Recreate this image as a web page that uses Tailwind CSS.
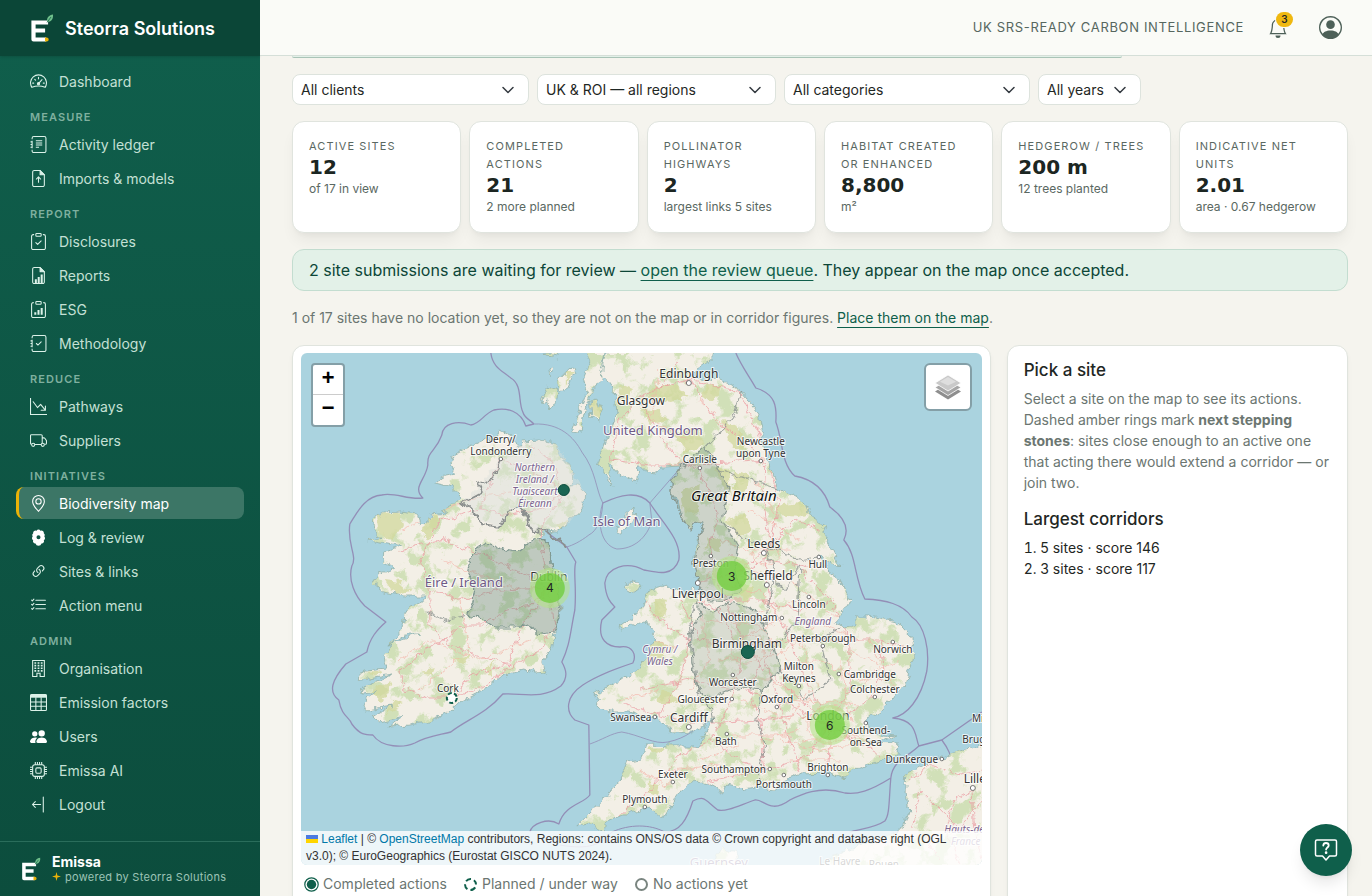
<!DOCTYPE html>
<html lang="en">
<head>
    <meta charset="UTF-8">
    <meta name="viewport" content="width=device-width, initial-scale=1.0">
    <title>Biodiversity map - Steorra Solutions</title>
    <script src="https://cdn.jsdelivr.net/npm/@tailwindcss/browser@4"></script>
</head>
<body class="flex h-screen overflow-hidden bg-[#f5f4ee] font-[Inter,sans-serif] text-[#1f2724]">

    <!-- Shared symbols -->
    <svg class="hidden">
        <symbol id="logo" viewBox="0 0 24 28">
            <path d="M3.500 8.500H16M3.500 8.500V25.500H14M3.500 16.500H13" fill="none" stroke="#fff" stroke-width="4.200" stroke-linecap="square" stroke-linejoin="round"/>
            <path d="M15 27.600V23.400h1.600a2.100 2.100 0 0 1 0 4.200z" fill="#eab308"/>
            <path d="M17 8C16.500 3.500 19 1 23 .5C23.500 4.500 21.500 8 17 8z" fill="#6fbf8b"/>
            <path d="M17 8.500L21 3" stroke="#14604c" stroke-width=".8"/>
        </symbol>
    </svg>

    <!-- Sidebar -->
    <aside class="flex w-[260px] shrink-0 flex-col bg-linear-to-b from-[#105f4c] to-[#0c4d3d]">
        <div class="flex h-14 shrink-0 items-center gap-[11px] bg-[#0b4637] pl-[30px] shadow">
            <svg class="h-7 w-6" aria-hidden="true"><use href="#logo"/></svg>
            <span class="text-[18px] font-semibold text-white">Steorra Solutions</span>
        </div>

        <nav class="flex grow flex-col gap-[2px] px-4 pt-[9px] text-[14px] text-[#c4e0d5]">
            <a href="#" class="flex h-8 items-center gap-3 rounded-lg pl-[14px]">
                <svg class="size-[17px] text-[#dcf2e9]" viewBox="0 0 16 16" fill="none" stroke="currentColor" stroke-linecap="round"><path d="M1.800 13.500A7.500 7.500 0 1 1 14.200 13.500C10.500 12 5.500 12 1.800 13.500zM8 4v1.500M3.500 9.500H2.500M13.500 9.500H12.500M4.500 6l.7.7M8 10l3.300-3.700"/><circle cx="8" cy="10" r="1" fill="currentColor"/></svg>
                Dashboard
            </a>

            <h2 class="h-[27px] pt-[9px] pl-[14px] text-[11px] leading-[18px] font-semibold tracking-widest text-[#7fb09f]">MEASURE</h2>
            <a href="#" class="flex h-8 items-center gap-3 rounded-lg pl-[14px]">
                <svg class="size-[17px] text-[#dcf2e9]" viewBox="0 0 16 16" fill="none" stroke="currentColor"><path d="M2 3V2a1.500 1.500 0 0 1 1.500-1.500h10A1.500 1.500 0 0 1 15 2v12a1.500 1.500 0 0 1-1.500 1.500h-10A1.500 1.500 0 0 1 2 14v-1M.5 5.500h2M.5 8h2M.5 10.500h2M2 4.500v7"/><path d="M5.500 4.500h6M5.500 6.500h6M5.500 8.500h6M5.500 10.500h3"/></svg>
                Activity ledger
            </a>
            <a href="#" class="flex h-8 items-center gap-3 rounded-lg pl-[14px]">
                <svg class="size-[17px] text-[#dcf2e9]" viewBox="0 0 16 16" fill="none" stroke="currentColor" stroke-linecap="round" stroke-linejoin="round"><path d="M9.500.5H4A1.500 1.500 0 0 0 2.500 2v12A1.500 1.500 0 0 0 4 15.500h8a1.500 1.500 0 0 0 1.500-1.500V4.500zM8 11.500v-5M6 8.500l2-2 2 2"/><path d="M9.500.5v4h4z" fill="currentColor"/></svg>
                Imports &amp; models
            </a>

            <h2 class="h-[27px] pt-[9px] pl-[14px] text-[11px] leading-[18px] font-semibold tracking-widest text-[#7fb09f]">REPORT</h2>
            <a href="#" class="flex h-8 items-center gap-3 rounded-lg pl-[14px]">
                <svg class="size-[17px] text-[#dcf2e9]" viewBox="0 0 16 16" fill="none" stroke="currentColor" stroke-linecap="round" stroke-linejoin="round"><path d="M3.500 1.500H3A1.500 1.500 0 0 0 1.500 3v11A1.500 1.500 0 0 0 3 15.500h10a1.500 1.500 0 0 0 1.500-1.500V3A1.500 1.500 0 0 0 13 1.500h-.5M5.500 9l1.700 1.700L10.500 7.500"/><rect x="5.500" y=".5" width="5" height="2.500" rx=".7"/></svg>
                Disclosures
            </a>
            <a href="#" class="flex h-8 items-center gap-3 rounded-lg pl-[14px]">
                <svg class="size-[17px] text-[#dcf2e9]" viewBox="0 0 16 16" fill="none" stroke="currentColor" stroke-linejoin="round"><path d="M9.500.5H4A1.500 1.500 0 0 0 2.500 2v12A1.500 1.500 0 0 0 4 15.500h8a1.500 1.500 0 0 0 1.500-1.500V4.500z"/><path d="M9.500.5v4h4z" fill="currentColor"/><path d="M5.500 15v-3.500M8.200 15V9.500M11 15V7" stroke-width="1.900"/></svg>
                Reports
            </a>
            <a href="#" class="flex h-8 items-center gap-3 rounded-lg pl-[14px]">
                <svg class="size-[17px] text-[#dcf2e9]" viewBox="0 0 16 16" fill="none" stroke="currentColor" stroke-linejoin="round"><path d="M3.500 1.500H3A1.500 1.500 0 0 0 1.500 3v11A1.500 1.500 0 0 0 3 15.500h10a1.500 1.500 0 0 0 1.500-1.500V3A1.500 1.500 0 0 0 13 1.500h-.5"/><rect x="5.500" y=".5" width="5" height="2.500" rx=".7"/><path d="M5 13v-2.500M8 13V8.500M11 13V6.500" stroke-width="1.900"/></svg>
                ESG
            </a>
            <a href="#" class="flex h-8 items-center gap-3 rounded-lg pl-[14px]">
                <svg class="size-[17px] text-[#dcf2e9]" viewBox="0 0 16 16" fill="none" stroke="currentColor"><path d="M2 3V2a1.500 1.500 0 0 1 1.500-1.500h10A1.500 1.500 0 0 1 15 2v12a1.500 1.500 0 0 1-1.500 1.500h-10A1.500 1.500 0 0 1 2 14v-1M.5 5.500h2M.5 8h2M.5 10.500h2M2 4.500v7"/><path d="M6 8l1.500 1.500 3-3" stroke-linecap="round"/></svg>
                Methodology
            </a>

            <h2 class="h-[27px] pt-[9px] pl-[14px] text-[11px] leading-[18px] font-semibold tracking-widest text-[#7fb09f]">REDUCE</h2>
            <a href="#" class="flex h-8 items-center gap-3 rounded-lg pl-[14px]">
                <svg class="size-[17px] text-[#dcf2e9]" viewBox="0 0 16 16" fill="currentColor"><path d="M0 0h1v15h15v1H0zm10 11.500a.5.5 0 0 0 .5.5h4a.5.5 0 0 0 .5-.5v-4a.5.5 0 0 0-1 0v2.600l-3.613-4.417a.5.5 0 0 0-.74-.037L7.060 8.233 3.404 3.206a.5.5 0 0 0-.808.588l4 5.500a.5.5 0 0 0 .758.06l2.609-2.610L13.445 11H10.500a.5.5 0 0 0-.5.5"/></svg>
                Pathways
            </a>
            <a href="#" class="flex h-8 items-center gap-3 rounded-lg pl-[14px]">
                <svg class="size-[17px] text-[#dcf2e9]" viewBox="0 0 16 16" fill="none" stroke="currentColor"><path d="M1.500 11.500A1 1 0 0 1 .5 10.500v-7a1 1 0 0 1 1-1h9a1 1 0 0 1 1 1v7M4.500 11.800h6M11.500 5.500h1.600a1 1 0 0 1 .8.400l1.300 1.700a1 1 0 0 1 .3.700v2.200a1 1 0 0 1-1 1h-.8"/><circle cx="3" cy="12" r="1.500"/><circle cx="12" cy="12" r="1.500"/></svg>
                Suppliers
            </a>

            <h2 class="h-[27px] pt-[9px] pl-[14px] text-[11px] leading-[18px] font-semibold tracking-widest text-[#7fb09f]">INITIATIVES</h2>
            <a href="#" aria-current="page" class="flex h-8 items-center gap-3 rounded-lg border-l-[3px] border-[#eab308] bg-[#3c7666] pl-[11px] text-white">
                <svg class="size-[17px]" viewBox="0 0 16 16" fill="currentColor"><path d="M12.166 8.940c-.524 1.062-1.234 2.120-1.960 3.070A32 32 0 0 1 8 14.580a32 32 0 0 1-2.206-2.570c-.726-.950-1.436-2.008-1.960-3.070C3.304 7.867 3 6.862 3 6a5 5 0 0 1 10 0c0 .862-.305 1.867-.834 2.940M8 16s6-5.686 6-10A6 6 0 0 0 2 6c0 4.314 6 10 6 10"/><path d="M8 8a2 2 0 1 1 0-4 2 2 0 0 1 0 4m0 1a3 3 0 1 0 0-6 3 3 0 0 0 0 6"/></svg>
                Biodiversity map
            </a>
            <a href="#" class="flex h-8 items-center gap-3 rounded-lg pl-[14px]">
                <svg class="size-[17px] text-white" viewBox="0 0 16 16" fill="currentColor"><path fill-rule="evenodd" d="M8 .5A2 2 0 0 1 9.800 1.600A2.200 2.200 0 0 1 13 4A2.200 2.200 0 0 1 13.500 7A2.500 2.500 0 0 1 13 10.500A2.200 2.200 0 0 1 10.800 13.600A2.900 2.900 0 0 1 5.200 13.600A2.200 2.200 0 0 1 3 10.500A2.500 2.500 0 0 1 2.500 7A2.200 2.200 0 0 1 3 4A2.200 2.200 0 0 1 6.200 1.600A2 2 0 0 1 8 .5M8 5.800a1.900 1.900 0 1 0 0 3.800a1.900 1.900 0 0 0 0-3.800"/></svg>
                Log &amp; review
            </a>
            <a href="#" class="flex h-8 items-center gap-3 rounded-lg pl-[14px]">
                <svg class="size-[17px] text-[#dcf2e9]" viewBox="0 0 16 16" fill="currentColor"><path d="M4.715 6.542 3.343 7.914a3 3 0 1 0 4.243 4.243l1.828-1.829A3 3 0 0 0 8.586 5.500L8 6.086a1 1 0 0 0-.154.199 2 2 0 0 1 .861 3.337L6.880 11.450a2 2 0 1 1-2.830-2.830l.793-.792a4 4 0 0 1-.128-1.287z"/><path d="M6.586 4.672A3 3 0 0 0 7.414 9.500l.775-.776a2 2 0 0 1-.896-3.346L9.120 3.550a2 2 0 1 1 2.830 2.830l-.793.792c.112.420.155.855.128 1.287l1.372-1.372a3 3 0 1 0-4.243-4.243z"/></svg>
                Sites &amp; links
            </a>
            <a href="#" class="flex h-8 items-center gap-3 rounded-lg pl-[14px]">
                <svg class="size-[17px] text-[#dcf2e9]" viewBox="0 0 16 16" fill="none" stroke="currentColor" stroke-linecap="round" stroke-linejoin="round"><path d="M5.500 3h9M5.500 7h9M5.500 11h9M1.500 3l.7.7 1.500-1.700M1.500 7l.7.7 1.500-1.700M1.500 11l.7.7 1.500-1.700"/></svg>
                Action menu
            </a>

            <h2 class="h-[27px] pt-[9px] pl-[14px] text-[11px] leading-[18px] font-semibold tracking-widest text-[#7fb09f]">ADMIN</h2>
            <a href="#" class="flex h-8 items-center gap-3 rounded-lg pl-[14px]">
                <svg class="size-[17px] text-[#dcf2e9]" viewBox="0 0 16 16" fill="none" stroke="currentColor"><path d="M2.500.5h11v15h-4v-3h-3v3h-4z"/><path d="M5 2v9M8 2v9M11 2v9" stroke-width="1.700" stroke-dasharray="1.500 1"/></svg>
                Organisation
            </a>
            <a href="#" class="flex h-8 items-center gap-3 rounded-lg pl-[14px]">
                <svg class="size-[17px] text-[#dcf2e9]" viewBox="0 0 16 16" fill="none" stroke="currentColor"><rect x=".5" y=".5" width="15" height="15" rx="1"/><path d="M.5 2h15" stroke-width="3"/><path d="M.5 7.500h15M.5 11.500h15M5.500 3v12.500M10.500 3v12.500"/></svg>
                Emission factors
            </a>
            <a href="#" class="flex h-8 items-center gap-3 rounded-lg pl-[14px]">
                <svg class="size-[17px] text-white" viewBox="0 0 16 16" fill="currentColor"><path d="M7 14s-1 0-1-1 1-4 5-4 5 3 5 4-1 1-1 1zm4-6a3 3 0 1 0 0-6 3 3 0 0 0 0 6m-5.784 6A2.240 2.240 0 0 1 5 13c0-1.355.680-2.750 1.936-3.720A6.300 6.300 0 0 0 5 9c-4 0-5 3-5 4s1 1 1 1zM4.500 8a2.500 2.500 0 1 0 0-5 2.500 2.500 0 0 0 0 5"/></svg>
                Users
            </a>
            <a href="#" class="flex h-8 items-center gap-3 rounded-lg pl-[14px]">
                <svg class="size-[17px] text-[#dcf2e9]" viewBox="0 0 16 16" fill="none" stroke="currentColor"><rect x="2.500" y="2.500" width="11" height="11" rx="2"/><rect x="5.500" y="5.500" width="5" height="5" rx="1"/><path d="M5 0v2.500M7 0v2.500M9 0v2.500M11 0v2.500M5 13.500V16M7 13.500V16M9 13.500V16M11 13.500V16M0 5h2.500M0 7h2.500M0 9h2.500M0 11h2.500M13.500 5H16M13.500 7H16M13.500 9H16M13.500 11H16"/></svg>
                Emissa AI
            </a>
            <a href="#" class="flex h-8 items-center gap-3 rounded-lg pl-[14px]">
                <svg class="size-[17px] text-[#dcf2e9]" viewBox="0 0 16 16" fill="none" stroke="currentColor" stroke-linecap="round" stroke-linejoin="round"><path d="M12.500 1v14M10 8H2.500M5 5.200L2.300 8 5 10.800"/></svg>
                Logout
            </a>
        </nav>

        <div class="flex h-[55px] shrink-0 items-center gap-[11px] border-t border-[#2a6d5b] pl-[21px]">
            <svg class="h-6 w-5" aria-hidden="true"><use href="#logo"/></svg>
            <div class="pb-px">
                <div class="text-[14px] leading-4 font-bold text-white">Emissa</div>
                <div class="flex items-center gap-1 text-[11px] leading-[14px] tracking-wide text-[#9cc4b6]">
                    <svg class="size-[9px]" viewBox="0 0 10 10" fill="#eab308"><path d="M5 0l1 4 4 1-4 1-1 4-1-4-4-1 4-1z"/></svg>
                    powered by Steorra Solutions
                </div>
            </div>
        </div>
    </aside>

    <div class="flex min-w-0 grow flex-col">
        <!-- Top bar -->
        <header class="flex h-14 shrink-0 items-center justify-end border-b border-[#d5dfd8] bg-[#fafbf7] pr-[30px]">
            <span class="text-[13px] tracking-wider text-[#56675f]">UK SRS-READY CARBON INTELLIGENCE</span>
            <button type="button" aria-label="Notifications" class="relative ml-6 text-[#4d6058]">
                <svg class="size-5" viewBox="0 0 16 16" fill="currentColor"><path d="M8 16a2 2 0 0 0 2-2H6a2 2 0 0 0 2 2M8 1.918l-.797.161A4 4 0 0 0 4 6c0 .628-.134 2.197-.459 3.742-.160.767-.376 1.566-.663 2.258h10.244c-.287-.692-.502-1.490-.663-2.258C12.134 8.197 12 6.628 12 6a4 4 0 0 0-3.203-3.920zM14.220 12c.223.447.481.801.780 1H1c.299-.199.557-.553.780-1C2.680 10.200 3 6.880 3 6c0-2.420 1.720-4.440 4.005-4.901a1 1 0 1 1 1.990 0A5 5 0 0 1 13 6c0 .880.320 4.200 1.220 6"/></svg>
                <span class="absolute -top-[6px] left-[8px] flex h-[15px] w-[17px] items-center justify-center rounded-full bg-[#efb810] text-[10px] font-semibold text-[#1f2724] ring-1 ring-[#fafbf7]">3</span>
            </button>
            <button type="button" aria-label="Account" class="ml-[31px] text-[#4d6058]">
                <svg class="size-[23px]" viewBox="0 0 16 16" fill="currentColor"><path d="M11 6a3 3 0 1 1-6 0 3 3 0 0 1 6 0"/><path fill-rule="evenodd" d="M0 8a8 8 0 1 1 16 0A8 8 0 0 1 0 8m8-7a7 7 0 0 0-5.468 11.370C3.242 11.226 4.805 10 8 10s4.757 1.225 5.468 2.370A7 7 0 0 0 8 1"/></svg>
            </button>
        </header>

        <main class="min-h-0 grow overflow-hidden pr-6 pl-8">
            <div class="h-[2px] max-w-[830px] rounded-b-sm border-b border-[#a9c4b7] bg-[#e2f0e8]"></div>

            <!-- Filters -->
            <form class="mt-4 flex gap-2 text-[14px]">
                <div class="relative w-[237px]">
                    <select aria-label="Client" class="h-[31px] w-full appearance-none rounded-lg border border-[#dde3dd] bg-white pr-8 pl-2"><option>All clients</option></select>
                    <svg class="pointer-events-none absolute top-[10px] right-[15px] size-3" viewBox="0 0 12 12" fill="none" stroke="#343a40" stroke-width="1.500" stroke-linecap="round" stroke-linejoin="round"><path d="M1 3.500l5 5 5-5"/></svg>
                </div>
                <div class="relative w-[239px]">
                    <select aria-label="Region" class="h-[31px] w-full appearance-none rounded-lg border border-[#dde3dd] bg-white pr-8 pl-2"><option>UK &amp; ROI — all regions</option></select>
                    <svg class="pointer-events-none absolute top-[10px] right-[15px] size-3" viewBox="0 0 12 12" fill="none" stroke="#343a40" stroke-width="1.500" stroke-linecap="round" stroke-linejoin="round"><path d="M1 3.500l5 5 5-5"/></svg>
                </div>
                <div class="relative w-[246px]">
                    <select aria-label="Category" class="h-[31px] w-full appearance-none rounded-lg border border-[#dde3dd] bg-white pr-8 pl-2"><option>All categories</option></select>
                    <svg class="pointer-events-none absolute top-[10px] right-[15px] size-3" viewBox="0 0 12 12" fill="none" stroke="#343a40" stroke-width="1.500" stroke-linecap="round" stroke-linejoin="round"><path d="M1 3.500l5 5 5-5"/></svg>
                </div>
                <div class="relative w-[103px]">
                    <select aria-label="Year" class="h-[31px] w-full appearance-none rounded-lg border border-[#dde3dd] bg-white pr-8 pl-2"><option>All years</option></select>
                    <svg class="pointer-events-none absolute top-[10px] right-[15px] size-3" viewBox="0 0 12 12" fill="none" stroke="#343a40" stroke-width="1.500" stroke-linecap="round" stroke-linejoin="round"><path d="M1 3.500l5 5 5-5"/></svg>
                </div>
            </form>

            <!-- Summary cards -->
            <div class="mt-4 grid grid-cols-6 gap-2 text-[12px] leading-[18px] text-[#5a6862]">
                <div class="rounded-xl border border-[#e0e4de] bg-white px-4 pt-[15px] pb-4 shadow-lg shadow-black/6">
                    <div class="text-[11px] leading-[18px] tracking-widest">ACTIVE SITES</div>
                    <div class="font-['DejaVu_Sans'] text-[20px] leading-[25px] font-bold text-[#1c2622]">12</div>
                    <div>of 17 in view</div>
                </div>
                <div class="rounded-xl border border-[#e0e4de] bg-white px-4 pt-[15px] pb-4 shadow-lg shadow-black/6">
                    <div class="text-[11px] leading-[18px] tracking-widest">COMPLETED ACTIONS</div>
                    <div class="font-['DejaVu_Sans'] text-[20px] leading-[25px] font-bold text-[#1c2622]">21</div>
                    <div>2 more planned</div>
                </div>
                <div class="rounded-xl border border-[#e0e4de] bg-white px-4 pt-[15px] pb-4 shadow-lg shadow-black/6">
                    <div class="text-[11px] leading-[18px] tracking-widest">POLLINATOR HIGHWAYS</div>
                    <div class="font-['DejaVu_Sans'] text-[20px] leading-[25px] font-bold text-[#1c2622]">2</div>
                    <div>largest links 5 sites</div>
                </div>
                <div class="rounded-xl border border-[#e0e4de] bg-white px-4 pt-[15px] pb-4 shadow-lg shadow-black/6">
                    <div class="text-[11px] leading-[18px] tracking-widest">HABITAT CREATED OR ENHANCED</div>
                    <div class="font-['DejaVu_Sans'] text-[20px] leading-[25px] font-bold text-[#1c2622]">8,800</div>
                    <div>m²</div>
                </div>
                <div class="rounded-xl border border-[#e0e4de] bg-white px-4 pt-[15px] pb-4 shadow-lg shadow-black/6">
                    <div class="text-[11px] leading-[18px] tracking-widest">HEDGEROW / TREES</div>
                    <div class="font-['DejaVu_Sans'] text-[20px] leading-[25px] font-bold text-[#1c2622]">200 m</div>
                    <div>12 trees planted</div>
                </div>
                <div class="rounded-xl border border-[#e0e4de] bg-white px-4 pt-[15px] pb-4 shadow-lg shadow-black/6">
                    <div class="text-[11px] leading-[18px] tracking-widest">INDICATIVE NET UNITS</div>
                    <div class="font-['DejaVu_Sans'] text-[20px] leading-[25px] font-bold text-[#1c2622]">2.01</div>
                    <div>area · 0.67 hedgerow</div>
                </div>
            </div>

            <div class="mt-4 rounded-xl border border-[#c3ddd0] bg-[#e3f1e8] px-4 py-2 text-[16px] leading-6 text-[#0c4637]">
                2 site submissions are waiting for review — <a href="#" class="text-[#0f5f4b] underline underline-offset-4">open the review queue</a>. They appear on the map once accepted.
            </div>

            <p class="mt-4 text-[14px] leading-[22px] text-[#6b7671]">
                1 of 17 sites have no location yet, so they are not on the map or in corridor figures. <a href="#" class="text-[#0f5f4b] underline underline-offset-4">Place them on the map</a>.
            </p>

            <div class="mt-4 grid grid-cols-12 gap-4">
                <!-- Map -->
                <section class="col-span-8 h-[600px] rounded-xl border border-[#e0e4de] bg-white p-2 pt-[7px] shadow-md shadow-black/5">
                    <div class="relative h-[512px] overflow-hidden rounded-md bg-[#aad3df]">
                        <svg class="h-full w-full" viewBox="301 353 681 512" preserveAspectRatio="xMidYMid slice" font-family="Noto Sans, sans-serif">
                            <defs>
                                <filter id="rough" x="-5%" y="-5%" width="110%" height="110%" color-interpolation-filters="sRGB">
                                    <feTurbulence type="fractalNoise" baseFrequency="0.12" numOctaves="3" seed="4"/>
                                    <feDisplacementMap in="SourceGraphic" scale="9" xChannelSelector="R" yChannelSelector="G"/>
                                </filter>
                                <filter id="woods" x="0" y="0" width="100%" height="100%" color-interpolation-filters="sRGB">
                                    <feTurbulence type="fractalNoise" baseFrequency="0.06" numOctaves="4" seed="9"/>
                                    <feColorMatrix values="0 0 0 0 .82  0 0 0 0 .88  0 0 0 0 .72  8 0 0 0 -4.100"/>
                                </filter>
                                <!-- Ireland, Great Britain, Kintyre, islands, continent, Cotentin -->
                                <path id="land" d="M500 430L513 437L517 447L522 441L540 440L556 443L559 455L566 461L573 472L574 480L568 486L578 485L585 492L584 505L577 515L568 517L567 525L558 532L546 531L541 537L550 545L551 565L557 575L560 590L560 612L554 635L551 650L543 662L546 672L535 673L525 669L513 672L500 677L488 687L475 695L457 704L447 714L430 721L410 725L389 727L404 716L380 722L372 717L392 706L366 710L363 702L378 692L362 694L366 686L392 674L375 677L358 680L363 670L388 668L385 656L392 645L387 646L404 637L420 634L405 634L388 645L403 628L405 615L411 606L423 601L426 596L405 596L383 592L372 583L380 572L397 567L383 562L384 553L400 547L388 544L368 541L380 537L375 528L373 518L387 512L400 511L417 513L421 526L432 516L447 514L442 510L457 503L462 497L453 487L435 483L445 475L456 473L450 462L454 455L470 446L487 438L493 442Z
                                    M607 353L600 372L607 378L614 388L616 400L617 413L610 430L604 448L599 463L607 478L612 484L609 463L620 476L637 482L638 468L646 468L653 475L663 467L682 466L673 480L671 492L678 500L682 517L690 530L696 522L705 522L699 538L695 547L694 563L698 583L703 596L693 589L683 594L667 586L647 592L645 600L641 609L631 618L618 627L623 630L638 622L649 624L655 638L650 655L637 670L622 681L607 687L594 695L600 700L598 708L612 712L630 712L645 717L657 716L665 725L672 733L692 732L707 724L714 718L706 734L699 746L672 746L646 745L642 758L628 760L620 780L602 802L588 815L577 826L592 823L604 832L606 821L622 816L636 811L650 807L661 817L669 814L676 797L686 783L704 782L723 792L726 785L744 789L757 787L775 790L783 780L800 774L828 773L843 778L853 770L873 763L887 760L897 755L898 743L870 742L898 735L868 733L868 718L880 712L890 702L907 680L913 657L912 637L897 622L870 616L855 616L855 625L847 629L836 622L845 608L850 600L840 580L827 570L818 557L841 566L832 548L823 532L826 526L813 518L807 505L795 497L778 488L773 473L765 450L761 430L758 412L748 400L737 387L720 380L690 377L695 372L713 358L715 345L607 345Z
                                    M583 345L590 365L584 380L586 393L581 408L572 432L580 433L585 410L592 392L602 378L607 345Z
                                    M590 402L598 400L602 412L599 422L591 418Z
                                    M572 367L576 370L568 388L560 392L557 382Z
                                    M543 395L548 387L558 390L556 406L550 410L548 400L540 402Z
                                    M549 370L553 367L552 373L550 376ZM546 353L560 353L558 357L548 355Z
                                    M634 508L635 516L622 532L617 532L620 521L629 513Z
                                    M626 584L638 581L641 588L634 594L628 590Z
                                    M990 741L963 750L942 758L920 767L907 773L906 790L909 812L904 828L884 838L856 847L828 860L826 872L990 872Z
                                    M722 848L737 852L738 870L712 870L716 858Z"/>
                                <clipPath id="landClip"><use href="#land"/></clipPath>
                            </defs>

                            <!-- Maritime boundaries -->
                            <g fill="none" stroke="#8f83b0" stroke-width="1.300" stroke-linejoin="round" opacity=".85">
                                <path d="M491 353C493 368 503 371 511 378C523 385 518 402 523 412C525 419 531 420 534 424"/>
                                <path d="M534 424L526 426C521 411 507 407 494 410C484 414 480 424 471 425C458 420 443 423 442 435C436 452 427 451 428 465C426 480 412 487 423 498C408 500 395 492 382 495C365 496 357 513 350 524C347 545 358 556 352 566C348 580 355 596 365 606L386 622C377 630 370 638 367 652L346 664C332 680 328 692 339 700C342 717 349 716 352 724C360 735 366 735 373 735C382 748 404 748 415 743C428 736 440 735 451 732C466 720 486 714 503 694C523 693 542 700 561 686C569 677 566 669 562 662C570 645 570 635 575 610C577 585 573 570 576 562L567 547L548 533"/>
                                <path d="M534 424C560 423 574 437 582 452C596 470 596 490 603 503C602 520 597 531 589 535C580 542 573 545 567 547" stroke-width=".8"/>
                                <path d="M603 503C620 495 638 490 650 503C662 522 682 540 679 560C673 578 655 572 644 570C627 561 607 567 605 583C606 598 611 603 615 607L602 620C597 640 608 647 620 647C633 645 637 655 633 663C618 668 600 674 583 685C565 697 566 712 575 720L589 725L590 795C584 804 565 804 559 824C548 817 532 824 530 832"/>
                                <path d="M603 503C597 520 600 545 617 549C634 549 647 538 652 521L650 503L683 465" stroke-width=".8"/>
                                <path d="M736 353C742 367 750 377 756 388C776 394 777 407 776 422C783 440 781 464 795 476C817 480 826 493 830 507C844 517 850 528 844 540C857 555 854 577 865 599C886 600 903 604 912 617C925 625 930 650 927 671C921 700 907 715 893 718C917 720 915 735 919 746L942 740L982 712"/>
                                <path d="M919 746C908 757 893 760 891 778C889 800 890 815 885 821C875 828 860 829 850 832M891 778C870 791 857 795 845 793C820 785 800 795 790 800C770 815 763 798 755 800C740 805 727 812 718 810C705 800 705 795 693 801C687 820 680 832 665 832M942 740C948 748 952 755 953 770L965 782"/>
                                <path d="M590 744C602 740 612 733 622 732C640 735 655 745 668 742C688 738 695 728 706 723" stroke-width=".8"/>
                                <path d="M665 832C650 824 630 824 612 832C600 845 590 850 560 845" stroke-width="1"/>
                            </g>

                            <g filter="url(#rough)">
                                <use href="#land" fill="#f3efe6"/>
                                <g clip-path="url(#landClip)">
                                    <rect x="301" y="353" width="681" height="512" filter="url(#woods)"/>
                                    <g fill="#d2d99c" opacity=".75">
                                        <path d="M378 515L400 512L402 525L392 540L382 536ZM425 518L440 516L434 532L424 538ZM385 580L400 582L412 590L395 596ZM372 690L392 682L382 702ZM395 700L405 704L385 714ZM365 672L382 670L378 676ZM452 660L470 655L465 664ZM485 670L492 662L492 678ZM555 525L567 520L562 532ZM422 672L435 668L432 676Z"/>
                                        <path d="M620 385L632 390L628 402L616 398ZM650 390L672 384L690 396L670 402L650 398ZM706 385L722 386L716 398L702 400ZM640 408L660 410L668 420L650 425ZM672 432L700 430L705 445L686 452ZM722 420L742 430L745 450L732 446ZM716 465L728 470L732 495L722 488ZM735 470L748 475L746 498L733 490ZM680 492L700 485L698 512L684 514ZM727 520L745 512L752 530L738 536ZM776 505L800 502L812 512L798 517L780 515ZM710 536L722 540L718 552L706 548ZM740 580L752 586L748 602L740 596ZM655 640L668 645L660 665L648 660ZM665 690L680 700L668 705L655 700ZM655 598L668 600L665 620L655 615ZM648 748L664 747L660 756ZM648 782L660 784L658 796L648 792ZM566 372L574 372L566 386ZM590 402L602 402L600 420L592 416Z"/>
                                    </g>

                                    <!-- Roads -->
                                    <g fill="none" stroke="#eb9aa0" stroke-width=".9" opacity=".8">
                                        <path d="M549 588L520 572L500 562L470 550L445 540L400 550M549 588L530 605L505 612L480 625L465 625L443 640L425 650L400 672M549 588L545 560L540 540L545 520L562 495M549 588L520 630L508 665L470 675L455 698M549 588L555 625L540 650L510 668L480 688L455 698L430 698L405 690L400 672M443 640L430 625L430 590L420 560L440 520L480 510L500 460M549 588L500 590L460 600L430 590M443 640L475 655L510 665M500 460L530 470L562 492L540 510L510 515L480 510M562 492L552 460L530 445"/>
                                        <path d="M640 398L660 388L690 380M640 398L655 430L680 462L700 470L712 500L718 520L710 545L715 575L725 595L735 620L745 645L760 665L790 690L830 725M690 380L715 420L750 445L765 465L763 500L770 540L765 560L770 600L790 640L805 680L830 725M660 388L680 360M640 398L620 420L610 460L650 465L700 465L765 460M690 380L740 392L762 440M695 580L715 578L740 572L765 560L800 565L818 570M740 572L770 545L795 520L820 530M770 545L780 500L770 470M745 645L735 690L725 715L710 740L680 755L650 790L620 815M745 645L700 640L680 600M745 645L790 640L830 640L880 640L910 650M830 725L800 715L760 720L725 722L690 722L660 715L625 705M830 725L810 755L770 770L740 775L700 785M830 725L828 770M830 725L880 755M830 725L870 700L885 670L880 640M830 725L850 690L850 640L830 600L800 570M830 725L780 700L745 690M760 665L750 690L760 720L765 770M780 640L765 660L775 690L790 740L800 772M710 740L740 760L765 770M696 600L720 610L740 650M760 600L800 610L835 600M770 600L720 600M660 715L680 680L690 640L660 620L645 600M735 690L690 680L640 690"/>
                                        <path d="M910 780L930 765L960 775L982 770M912 830L920 790L960 830L982 800M972 790L955 800L945 830L960 865M972 790L975 830L982 860M940 860L920 830"/>
                                    </g>
                                    <g fill="none" stroke="#f3b3a8" stroke-width=".7" opacity=".9">
                                        <path d="M830 725m-22 0a22 18 0 1 0 44 0a22 18 0 1 0-44 0M730 574m-14 0a14 12 0 1 0 28 0a14 12 0 1 0-28 0M748 650m-16 0a16 14 0 1 0 32 0a16 14 0 1 0-32 0M765 555m-14 0a14 10 0 1 0 28 0a14 10 0 1 0-28 0"/>
                                        <path d="M780 670L820 660L860 680L900 660M780 740L820 750L860 745M800 640L820 690M760 740L800 730M720 660L780 655L820 620M840 660L850 720M870 640L895 690M790 580L840 620M740 620L800 600M700 760L740 745M690 690L710 660L700 610M750 510L800 540M755 480L780 520M640 770L665 785L690 765M660 370L650 420L690 440M700 400L730 430M400 660L430 640L480 660L530 640M420 690L470 650L460 600M400 530L470 500L520 490M440 560L520 590"/>
                                        <path d="M700 600L760 590L780 620L740 640M720 540L750 550L790 550M690 590L730 555L760 575M705 620L760 625L790 660M710 680L770 680L810 700M740 700L790 720L810 690M800 740L850 735L880 745M790 760L840 760M850 650L880 665L860 690M810 620L860 640M730 735L790 735M670 770L720 765M620 700L660 690M650 640L680 650M790 700L860 705"/>
                                    </g>
                                </g>
                                <use href="#land" fill="none" stroke="#8fb0a8" stroke-width=".8"/>
                            </g>

                            <!-- Regions -->
                            <g filter="url(#rough)" stroke-linejoin="round">
                                <path d="M501 459L517 445L540 440L556 443L573 472L585 492L584 505L567 525L546 531L533 532L528 520L520 506L508 512L500 527L482 520L463 502L478 487Z" fill="#dbe0dc" fill-opacity=".45" stroke="none"/>
                                <path d="M501 459L494 478L478 484L482 492L463 502L475 514L482 524L500 527L508 512L520 506L528 520L533 532L546 531L567 547" fill="none" stroke="#8b8f8e" stroke-width="1.800"/>
                                <path d="M487 542L505 550L518 552L533 540L541 537L550 545L552 570L559 590L559 618L553 632L538 635L530 624L515 627L495 627L480 618L468 615L475 590L468 570L472 553Z" fill="#5f8576" fill-opacity=".35" stroke="#7f9790" stroke-width="1.200"/>
                                <path d="M705 448L720 470L730 490L722 520L738 545L735 570L742 590L728 600L710 602L700 588L694 563L699 538L705 522L696 522L690 530L682 517L671 492L673 480L682 466Z" fill="#5f8576" fill-opacity=".26" stroke="#8b9a92" stroke-width="1.200"/>
                                <path d="M697 602L712 612L730 602L750 608L765 625L775 650L780 670L762 690L745 688L728 690L712 697L697 690L692 660L690 635L700 618Z" fill="#8fa795" fill-opacity=".26" stroke="#8b9a92" stroke-width="1.200"/>
                            </g>
                            <g fill="none" stroke="#8b9390" stroke-width="1.100" filter="url(#rough)" opacity=".8">
                                <path d="M742 392L732 420L720 432L705 448M720 470L745 478L778 488M722 520L745 540L765 545L782 552L800 560L818 557M765 570L785 590L800 565M765 545L775 570L765 625M700 590L690 620L697 690L712 710L714 722M762 690L757 720L765 745L758 785M780 670L800 690L805 700L830 680L820 640L840 628M800 590L798 620L780 640M426 612L445 620L468 615M800 570L798 600"/>
                            </g>

                            <!-- Place markers -->
                            <g fill="#fff" stroke="#666" stroke-width=".9">
                                <circle cx="689" cy="383" r="2.500"/><circle cx="501" cy="459" r="1.800"/><circle cx="700" cy="468" r="1.800"/><circle cx="761" cy="461" r="1.800"/><circle cx="764" cy="553" r="2.500"/><circle cx="819" cy="557" r="1.800"/><circle cx="698" cy="583" r="2.500"/><circle cx="767" cy="585" r="2.500"/><circle cx="711" cy="556" r="1.800"/><circle cx="809" cy="597" r="1.800"/><circle cx="782" cy="618" r="1.800"/><circle cx="823" cy="646" r="1.800"/><circle cx="893" cy="642" r="1.800"/><circle cx="733" cy="675" r="1.800"/><circle cx="732" cy="699" r="1.800"/><circle cx="777" cy="707" r="1.800"/><circle cx="799" cy="686" r="1.800"/><circle cx="839" cy="674" r="1.800"/><circle cx="875" cy="697" r="1.800"/><circle cx="689" cy="727" r="2.500"/><circle cx="655" cy="717" r="1.800"/><circle cx="727" cy="734" r="1.800"/><circle cx="673" cy="782" r="1.800"/><circle cx="770" cy="769" r="1.800"/><circle cx="784" cy="775" r="1.800"/><circle cx="828" cy="775" r="1.800"/><circle cx="866" cy="723" r="1.800"/><circle cx="942" cy="759" r="1.800"/><circle cx="973" cy="788" r="2.500"/><circle cx="645" cy="807" r="1.800"/>
                            </g>

                            <!-- Labels -->
                            <g text-anchor="middle" fill="#333" stroke="#fff" stroke-opacity=".75" stroke-width="2" stroke-linejoin="round" paint-order="stroke">
                                <g font-size="12">
                                    <text x="689" y="378">Edinburgh</text><text x="641" y="405">Glasgow</text><text x="764" y="548">Leeds</text><text x="768" y="580">Sheffield</text><text x="698" y="598">Liverpool</text><text x="747" y="648">Birmingham</text><text x="689" y="722">Cardiff</text><text x="828" y="720">London</text><text x="549" y="581">Dublin</text><text x="975" y="783">Lille</text>
                                </g>
                                <g font-size="10">
                                    <text x="501" y="443">Derry/</text><text x="501" y="455">Londonderry</text><text x="761" y="445">Newcastle</text><text x="761" y="457">upon Tyne</text><text x="700" y="463">Carlisle</text><text x="818" y="568">Hull</text><text x="711" y="567">Preston</text><text x="809" y="608">Lincoln</text><text x="749" y="621">Nottingham</text><text x="823" y="642">Peterborough</text><text x="893" y="653">Norwich</text><text x="799" y="670">Milton</text><text x="799" y="682">Keynes</text><text x="870" y="678">Cambridge</text><text x="733" y="686">Worcester</text><text x="703" y="703">Gloucester</text><text x="777" y="703">Oxford</text><text x="875" y="693">Colchester</text><text x="631" y="721">Swansea</text><text x="726" y="745">Bath</text><text x="866" y="734">Southend-</text><text x="866" y="746">on-Sea</text><text x="673" y="778">Exeter</text><text x="734" y="773">Southampton</text><text x="784" y="788">Portsmouth</text><text x="828" y="771">Brighton</text><text x="912" y="763">Dunkerque</text><text x="645" y="803">Plymouth</text><text x="448" y="692">Cork</text><text x="978" y="722">Mi</text><text x="974" y="743">Brug</text><text x="840" y="865">Le Havre</text><text x="884" y="868">Rouen</text>
                                </g>
                                <g fill="#6f5a86" font-size="13">
                                    <text x="653" y="435">United Kingdom</text><text x="627" y="526">Isle of Man</text><text x="464" y="587">Éire / Ireland</text><text x="719" y="867">Guernsey</text>
                                </g>
                                <g fill="#7c6690" font-size="10" font-style="italic">
                                    <text x="535" y="471">Northern</text><text x="535" y="483">Ireland /</text><text x="535" y="495">Tuaisceart</text><text x="535" y="507">Éireann</text><text x="660" y="653">Cymru /</text><text x="660" y="665">Wales</text><text x="813" y="625">England</text><text x="966" y="833">Hauts-de-</text><text x="966" y="845">France</text>
                                </g>
                                <text x="734" y="501" font-size="15" font-style="italic" fill="#111">Great Britain</text>
                            </g>

                            <!-- Sites and clusters -->
                            <g fill="#b5e28c" fill-opacity=".6"><circle cx="550" cy="588" r="20"/><circle cx="732" cy="576" r="20"/><circle cx="830" cy="725" r="20"/></g>
                            <g fill="#6ecc39" fill-opacity=".75"><circle cx="550" cy="588" r="15"/><circle cx="732" cy="576" r="15"/><circle cx="830" cy="725" r="15"/></g>
                            <g text-anchor="middle" font-size="12" font-family="Inter, sans-serif" fill="#1f2724">
                                <text x="550" y="592">4</text><text x="732" y="581">3</text><text x="830" y="730">6</text>
                            </g>
                            <g fill="#1a6552" stroke="#0c4d3d" stroke-width="1"><circle cx="564" cy="490" r="5.500"/><circle cx="748" cy="652" r="6.500"/></g>
                            <circle cx="452" cy="698" r="5" fill="#fff" stroke="#0f5f4b" stroke-width="2" stroke-dasharray="4 2.300"/>
                        </svg>

                        <div class="absolute top-[10px] left-[10px] flex flex-col overflow-hidden rounded-sm border-2 border-[#849fa7] bg-white font-['Liberation_Mono'] text-[22px] leading-[30px] font-bold text-black">
                            <button type="button" aria-label="Zoom in" class="h-[30px] w-[30px] border-b border-[#ccc]">+</button>
                            <button type="button" aria-label="Zoom out" class="h-[30px] w-[30px]">−</button>
                        </div>
                        <button type="button" aria-label="Layers" class="absolute top-[10px] right-[10px] flex size-12 items-center justify-center rounded-md border-2 border-[#849fa7] bg-white">
                            <svg class="size-[26px]" viewBox="0 0 26 26"><path d="M0 17.500L13 9.500l13 8-13 8z" fill="#8e8e8e"/><path d="M0 13.500L13 5.500l13 8-13 8z" fill="#a5a5a5" stroke="#fff" stroke-width=".8"/><path d="M0 9L13 1l13 8-13 8z" fill="#c9c9c9" stroke="#fff" stroke-width=".8"/><path d="M5 7.800L13 3l8 4.800-8 3.800z" fill="#dedede"/></svg>
                        </button>
                        <div class="absolute right-0 bottom-0 left-0 bg-white/80 px-[5px] font-['Liberation_Sans'] text-[12px] leading-[17px] text-[#333]">
                            <svg class="inline h-2 w-3 align-baseline" viewBox="0 0 12 8"><path fill="#4c7be1" d="M0 0h12v4H0z"/><path fill="#ffd500" d="M0 4h12v4H0z"/></svg>
                            <a href="#" class="text-[#0078a8]">Leaflet</a> | © <a href="#" class="text-[#0078a8]">OpenStreetMap</a> contributors, Regions: contains ONS/OS data © Crown copyright and database right (OGL v3.0); © EuroGeographics (Eurostat GISCO NUTS 2024).
                        </div>
                    </div>

                    <div class="mt-2 flex items-center gap-4 pl-[3px] text-[14px] leading-[22px] text-[#6b7671]">
                        <span class="flex items-center gap-1"><svg class="size-[15px]" viewBox="0 0 15 15"><circle cx="7.500" cy="7.500" r="6.700" fill="none" stroke="#0f5f4b" stroke-width="1.200"/><circle cx="7.500" cy="7.500" r="4.700" fill="#0f5f4b"/></svg>Completed actions</span>
                        <span class="flex items-center gap-1"><svg class="size-[15px]" viewBox="0 0 15 15"><circle cx="7.500" cy="7.500" r="5.500" fill="none" stroke="#0f5f4b" stroke-width="2" stroke-dasharray="5.500 3.140" stroke-dashoffset="-3"/></svg>Planned / under way</span>
                        <span class="flex items-center gap-1"><svg class="size-[15px]" viewBox="0 0 15 15"><circle cx="7.500" cy="7.500" r="5.500" fill="none" stroke="#7a8580" stroke-width="2"/></svg>No actions yet</span>
                    </div>
                </section>

                <!-- Details -->
                <section class="col-span-4 rounded-xl border border-[#e0e4de] bg-white px-4 pt-[14px] text-[14px] leading-[21px] shadow-md shadow-black/5">
                    <h2 class="mb-2 text-[17px] leading-5 font-medium">Pick a site</h2>
                    <p class="text-[#6b7671]">Select a site on the map to see its actions. Dashed amber rings mark <b class="font-bold">next stepping stones</b>: sites close enough to an active one that acting there would extend a corridor — or join two.</p>
                    <h2 class="mt-4 mb-2 text-[17px] leading-5 font-medium">Largest corridors</h2>
                    <ol class="list-inside list-decimal">
                        <li>5 sites · score 146</li>
                        <li>3 sites · score 117</li>
                    </ol>
                </section>
            </div>
        </main>
    </div>

    <button type="button" aria-label="Help" class="fixed right-5 bottom-5 flex size-[52px] items-center justify-center rounded-full bg-[#0f5f4b] text-white shadow-lg">
        <svg class="size-6" viewBox="0 0 24 24" fill="none" stroke="currentColor" stroke-width="1.500" stroke-linecap="round" stroke-linejoin="round"><path d="M3 2h18a1.500 1.500 0 0 1 1.500 1.500v13A1.500 1.500 0 0 1 21 18h-5.500L12 22l-3.500-4H3a1.500 1.500 0 0 1-1.500-1.500v-13A1.500 1.500 0 0 1 3 2z"/><path d="M9.300 7.500c.1-1.700 1.200-2.500 2.700-2.500s2.700 1 2.700 2.400c0 2-2.600 2.100-2.600 4.200" stroke-width="1.800"/><circle cx="12.100" cy="14.700" r=".6" fill="currentColor"/></svg>
    </button>
</body>
</html>
